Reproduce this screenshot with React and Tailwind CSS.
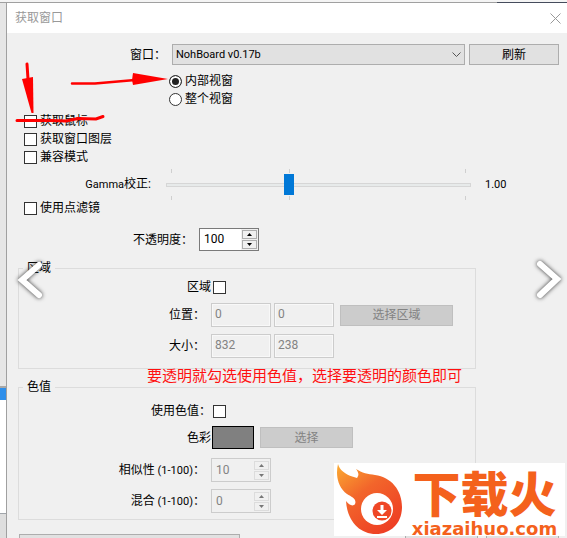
import React, { useState } from 'react';
import clsx from 'clsx';

const CheckBox = ({ id, className }) => (
  <input
    id={id}
    type="checkbox"
    className={clsx(
      'appearance-none size-[13px] flex-none border border-[#333333] bg-white checked:bg-[#0078d7]',
      className
    )}
  />
);

const CheckRow = ({ id, label }) => (
  <div className="flex h-[18px] items-center gap-[3px] pl-[17px]">
    <CheckBox id={id} />
    <label htmlFor={id}>{label}</label>
  </div>
);

const RadioRow = ({ id, label, checked, onChange }) => (
  <div className="flex h-[18px] items-center gap-[3px] pl-[162px]">
    <input
      id={id}
      type="radio"
      name="view"
      checked={checked}
      onChange={onChange}
      className="size-[13px] flex-none appearance-none rounded-full border border-[#333333] bg-white checked:bg-[#222222] checked:shadow-[inset_0_0_0_2px_white]"
    />
    <label htmlFor={id}>{label}</label>
  </div>
);

const SpinBox = ({ id, initial, disabled }) => {
  const [value, setValue] = useState(initial);
  const stepClass = clsx(
    'flex h-[9px] w-[15px] items-center justify-center border bg-[#f0f0f0]',
    disabled ? 'border-[#dcdcdc] text-[#777777]' : 'border-[#adadad] text-black'
  );

  return (
    <div
      className={clsx(
        'flex w-[60px] border',
        disabled ? 'h-6 border-[#cccccc] bg-[#f0f0f0] text-[#838383]' : 'h-[23px] border-[#7a7a7a] bg-white text-black'
      )}
    >
      <input
        id={id}
        type="number"
        value={value}
        disabled={disabled}
        onChange={e => setValue(Number(e.target.value))}
        className="w-0 min-w-0 flex-1 pb-px pl-1 outline-none [appearance:textfield] [&::-webkit-inner-spin-button]:appearance-none"
      />
      <div className="flex flex-col justify-center gap-px bg-[#f0f0f0] px-px">
        <button type="button" aria-label="增加" disabled={disabled} className={stepClass} onClick={() => setValue(value + 1)}>
          <svg viewBox="0 0 5 3" className="h-[3px] w-[5px]" fill="currentColor"><path d="M0 3 2.5 0 5 3z" /></svg>
        </button>
        <button type="button" aria-label="减少" disabled={disabled} className={stepClass} onClick={() => setValue(value - 1)}>
          <svg viewBox="0 0 5 3" className="h-[3px] w-[5px]" fill="currentColor"><path d="M0 0 2.5 3 5 0z" /></svg>
        </button>
      </div>
    </div>
  );
};

const DisabledInput = ({ id, label, value }) => (
  <input
    id={id}
    aria-label={label}
    defaultValue={value}
    disabled
    className="h-6 w-[60px] border border-[#cccccc] bg-[#f0f0f0] pb-[3px] pl-[3px] text-[#838383] shadow-[inset_0_0_0_1px_#f8f8f8]"
  />
);

const FieldLabel = ({ htmlFor, wide, children }) => (
  <label htmlFor={htmlFor} className={clsx('w-48 flex-none text-right', !wide && 'pr-1.5')}>
    {children}
  </label>
);

const Ticks = () => (
  <div className="flex h-1 px-[5px]">
    <span className="w-px bg-[#cfcfcf]" />
    <span className="flex-[2]" />
    <span className="w-px bg-[#cfcfcf]" />
    <span className="flex-[3]" />
    <span className="w-px bg-[#cfcfcf]" />
  </div>
);

const GalleryArrow = ({ label, className, d }) => (
  <button type="button" aria-label={label} className={clsx('absolute top-[259px]', className)}>
    <svg
      viewBox="0 0 30 42"
      className="h-[42px] w-[30px] drop-shadow-[0_0_2px_#333333]"
      fill="none"
      stroke="white"
      strokeWidth="6"
      strokeLinecap="round"
    >
      <path d={d} />
    </svg>
  </button>
);

const BackgroundEdge = () => (
  <div className="flex w-1.5 flex-none flex-col bg-[#e6e6e6]">
    <div className="h-[383px] flex-none" />
    <div className="h-0.5 flex-none bg-[#a8a8a8]" />
    <div className="h-3 flex-none bg-[#2f8fea]" />
    <div className="h-[113px] flex-none bg-white" />
    <div className="h-px flex-none bg-[#a0a5aa]" />
    <div className="flex-1 bg-[#dedede]" />
  </div>
);

const FlameLogo = () => (
  <svg viewBox="0 0 70 73" className="h-[73px] w-[70px] flex-none">
    <defs>
      <linearGradient id="flame" x1="0" y1="0" x2="0.7" y2="1">
        <stop offset="0" stopColor="#fbab31" />
        <stop offset="0.45" stopColor="#f2652b" />
        <stop offset="1" stopColor="#ee3f24" />
      </linearGradient>
    </defs>
    <path
      fill="url(#flame)"
      d="M4 1C6 8 12 12 23 15C25 12 25 10 22 6C28 10 34 11 41 12C57 14 68 27 68 44C68 60 57 71 42 71C25 71 13 57 12 38C15 42 19 44 21 41C23 36 18 34 13 31C5 25 1 14 4 1Z"
    />
    <circle cx="43" cy="46" r="16" fill="white" />
    <circle cx="48" cy="48" r="9.5" fill="#ef4726" />
    <path d="M46.500 42h3v5h3.500l-5 5-5-5h3.500zM43 53h10v2H43z" fill="white" />
  </svg>
);

const SiteBadge = () => (
  <a
    href="#xiazaihuo"
    className="absolute right-0.5 top-[463px] flex h-[73px] w-[231px] bg-white text-[#f4611c]"
  >
    <FlameLogo />
    <span className="flex flex-1 flex-col items-center gap-1 pt-1">
      <span className="whitespace-nowrap font-['Noto_Sans_CJK_SC',sans-serif] text-[48px] font-black leading-[48px]">
        下载火
      </span>
      <span className="font-['DejaVu_Sans',sans-serif] text-[18px] font-bold leading-5">xiazaihuo.com</span>
    </span>
  </a>
);

const Annotations = () => (
  <>
    <svg viewBox="0 0 180 130" className="pointer-events-none absolute left-0 top-0 h-[130px] w-[180px]" fill="none" stroke="red" strokeLinecap="round">
      <path d="M27 64 28 79" strokeWidth="3" />
      <path d="M22 79 33 77 33.500 113 31.500 113Z" fill="red" stroke="none" />
      <path d="M72 83.500 95 83.500 135 80" strokeWidth="2.500" />
      <path d="M133 73 168 79 133 85 132 80Z" fill="red" stroke="none" />
      <path d="M17 120.500H50L66 121 78 118.500 96 119 103 116.500" strokeWidth="3" />
    </svg>
    <p className="absolute left-[147px] top-[366px] whitespace-nowrap text-[15px] leading-5 text-[#ff1010]">
      要透明就勾选使用色值，选择要透明的颜色即可
    </p>
    <GalleryArrow label="上一张" className="left-[14px]" d="M25 6 8 21 25 36" />
    <GalleryArrow label="下一张" className="right-[2px]" d="M5 5 22 20 5 36" />
    <SiteBadge />
  </>
);

const App = () => {
  const [view, setView] = useState('inner');
  const [gamma, setGamma] = useState(40);

  return (
    <div className="relative flex h-screen flex-col overflow-hidden bg-[#f0f0f0] font-['Roboto','Noto_Sans_CJK_SC',sans-serif] text-[12px] leading-4 text-black">
      <div className="flex h-[3px] flex-none flex-col justify-end bg-[#f4f4f4]">
        <div className="flex h-px">
          <div className="flex-1 bg-[#a0a0a0]" />
          <div className="w-[70px] bg-[#454c5c]" />
        </div>
      </div>

      <div className="flex min-h-0 flex-1">
        <BackgroundEdge />

        <main className="min-w-0 flex-1 border-l border-[#a0a0a0]">
          <header className="flex h-[30px] items-center justify-between bg-white pl-2 pr-1.5 text-[#999999]">
            <h1>获取窗口</h1>
            <button type="button" aria-label="关闭">
              <svg viewBox="0 0 11 11" className="size-[11px]" stroke="currentColor" fill="none">
                <path d="M.5.500 10.500 10.500M10.500.500.500 10.500" />
              </svg>
            </button>
          </header>

          <form onSubmit={e => e.preventDefault()}>
            <div className="flex items-center pr-2 pt-[11px]">
              <label htmlFor="window" className="w-[165px] flex-none pr-1.5 text-right">窗口：</label>
              <div className="relative flex min-w-0 flex-1">
                <select
                  id="window"
                  className="h-[21px] w-full appearance-none border border-[#adadad] bg-[#e1e1e1] pl-[3px] text-[11px] leading-[18px]"
                >
                  <option>NohBoard v0.17b</option>
                </select>
                <svg viewBox="0 0 9 6" className="pointer-events-none absolute right-1 top-2 h-1.5 w-[9px]" fill="none" stroke="#555555">
                  <path d="M.5.500 4.500 4.500 8.500.500" />
                </svg>
              </div>
              <button type="button" className="ml-1 h-[21px] w-[90px] flex-none border border-[#adadad] bg-[#e1e1e1]">
                刷新
              </button>
            </div>

            <div className="pt-[7px]">
              <RadioRow id="inner" label="内部视窗" checked={view === 'inner'} onChange={() => setView('inner')} />
              <RadioRow id="whole" label="整个视窗" checked={view === 'whole'} onChange={() => setView('whole')} />
            </div>

            <div className="pt-1">
              <CheckRow id="mouse" label="获取鼠标" />
              <CheckRow id="layered" label="获取窗口图层" />
              <CheckRow id="compat" label="兼容模式" />
            </div>

            <div className="flex h-[33px] items-center pr-24 pt-1">
              <label htmlFor="gamma" className="w-[159px] flex-none pr-[15px] text-right">
                <span className="text-[11px]">Gamma</span>校正:
              </label>
              <div className="flex min-w-0 flex-1 flex-col">
                <Ticks />
                <input
                  id="gamma"
                  type="range"
                  value={gamma}
                  onChange={e => setGamma(Number(e.target.value))}
                  className="h-[23px] w-full appearance-none bg-transparent [&::-webkit-slider-runnable-track]:h-1 [&::-webkit-slider-runnable-track]:border [&::-webkit-slider-runnable-track]:border-[#d6d6d6] [&::-webkit-slider-runnable-track]:bg-[#e7eaea] [&::-webkit-slider-thumb]:-mt-[10px] [&::-webkit-slider-thumb]:h-[21px] [&::-webkit-slider-thumb]:w-[10px] [&::-webkit-slider-thumb]:appearance-none [&::-webkit-slider-thumb]:bg-[#0078d7]"
                />
                <Ticks />
              </div>
              <output htmlFor="gamma" className="-mr-10 w-10 flex-none pl-3.5 text-[11px]">1.00</output>
            </div>

            <CheckRow id="point" label="使用点滤镜" />

            <div className="flex items-center pt-[11px]">
              <label htmlFor="opacity" className="w-48 flex-none pr-1.5 text-right">不透明度：</label>
              <SpinBox id="opacity" initial={100} />
            </div>

            <fieldset className="ml-[11px] mr-[91px] mt-[9px] border border-[#dcdcdc] pb-2.5">
              <legend className="ml-1 px-1">区域</legend>
              <div className="flex h-5 items-center gap-0.5 pt-0.5">
                <FieldLabel htmlFor="region" wide>区域</FieldLabel>
                <CheckBox id="region" />
              </div>
              <div className="flex items-center pt-[7px]">
                <FieldLabel htmlFor="pos-x">位置：</FieldLabel>
                <div className="flex items-center gap-[3px]">
                  <DisabledInput id="pos-x" value="0" />
                  <DisabledInput id="pos-y" label="位置 Y" value="0" />
                </div>
                <button type="button" disabled className="ml-1.5 h-[21px] w-[113px] border border-[#bfbfbf] bg-[#cccccc] text-[#838383]">
                  选择区域
                </button>
              </div>
              <div className="flex items-center pt-[7px]">
                <FieldLabel htmlFor="size-w">大小：</FieldLabel>
                <div className="flex items-center gap-[3px]">
                  <DisabledInput id="size-w" value="832" />
                  <DisabledInput id="size-h" label="高度" value="238" />
                </div>
              </div>
            </fieldset>

            <fieldset className="ml-[11px] mr-[91px] mt-2.5 border border-[#dcdcdc] pb-1.5">
              <legend className="ml-1 px-1">色值</legend>
              <div className="flex h-[25px] items-center gap-0.5 pt-[7px]">
                <FieldLabel htmlFor="use-key" wide>使用色值：</FieldLabel>
                <CheckBox id="use-key" />
              </div>
              <div className="flex items-center pt-1.5">
                <FieldLabel htmlFor="swatch" wide>色彩</FieldLabel>
                <button id="swatch" type="button" className="ml-px h-[23px] w-[42px] border border-black bg-[#808080]" />
                <button type="button" disabled className="ml-1.5 h-[21px] w-[93px] border border-[#bfbfbf] bg-[#cccccc] text-[#838383]">
                  选择
                </button>
              </div>
              <div className="flex items-center pt-[9px]">
                <FieldLabel htmlFor="similar">相似性 <span className="text-[11px]">(1-100)</span>：</FieldLabel>
                <SpinBox id="similar" initial={10} disabled />
              </div>
              <div className="flex items-center pt-[7px]">
                <FieldLabel htmlFor="blend">混合 <span className="text-[11px]">(1-100)</span>：</FieldLabel>
                <SpinBox id="blend" initial={0} disabled />
              </div>
            </fieldset>

            <div className="flex justify-between pl-3 pr-2 pt-3.5">
              <button type="button" aria-label="默认" className="h-[22px] w-[221px] border border-[#adadad] bg-[#e1e1e1]" />
              <div className="flex gap-2">
                <button type="button" aria-label="确定" className="h-[22px] w-[73px] border border-[#adadad] bg-[#e1e1e1]" />
                <button type="button" aria-label="取消" className="h-[22px] w-[73px] border border-[#adadad] bg-[#e1e1e1]" />
              </div>
            </div>
          </form>
        </main>
      </div>

      <Annotations />
    </div>
  );
};

export default App;
